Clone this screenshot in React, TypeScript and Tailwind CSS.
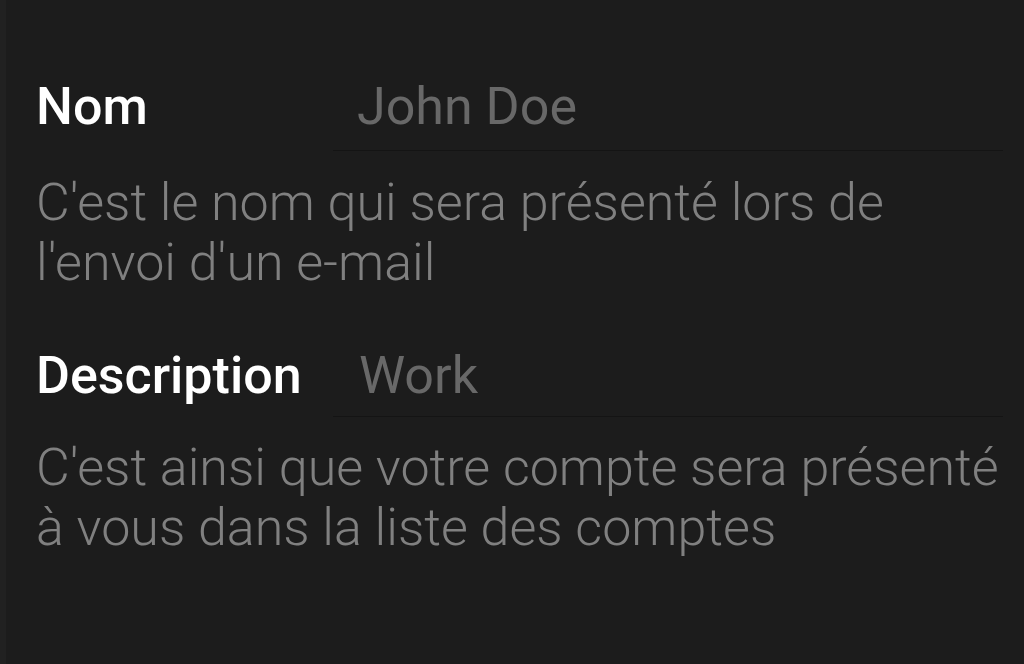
import React from "react";

export default function App() {
  return (
    <div
      className="w-[1024px] h-[664px] bg-[#1c1c1c] flex overflow-hidden"
      style={{ fontFamily: "Roboto, 'Noto Sans', sans-serif" }}
    >
      <div className="w-[6px] h-full bg-[#212121]" />
      <div className="flex-1 flex flex-col pl-[30px] pr-[21px] pt-[77px]">
        <div className="flex">
          <div className="w-[297px] text-[52px] leading-[60px] font-medium text-white">Nom</div>
          <div className="flex-1 h-[74px] border-b border-[#141414] pl-[24px] text-[52px] leading-[60px] text-[#686868]">
            John Doe
          </div>
        </div>
        <p className="mt-[22px] text-[52px] leading-[60px] font-light text-[#808080] whitespace-nowrap">
          C'est le nom qui sera présenté lors de
          <br />
          l'envoi d'un e-mail
        </p>
        <div className="flex mt-[53px]">
          <div className="w-[297px] text-[52px] leading-[60px] font-medium text-white">Description</div>
          <div className="flex-1 h-[71px] border-b border-[#141414] pl-[26px] text-[52px] leading-[60px] text-[#686868]">
            Work
          </div>
        </div>
        <p className="mt-[21px] text-[52px] leading-[60px] font-light text-[#808080] whitespace-nowrap">
          C'est ainsi que votre compte sera présenté
          <br />à vous dans la liste des comptes
        </p>
      </div>
    </div>
  );
}
